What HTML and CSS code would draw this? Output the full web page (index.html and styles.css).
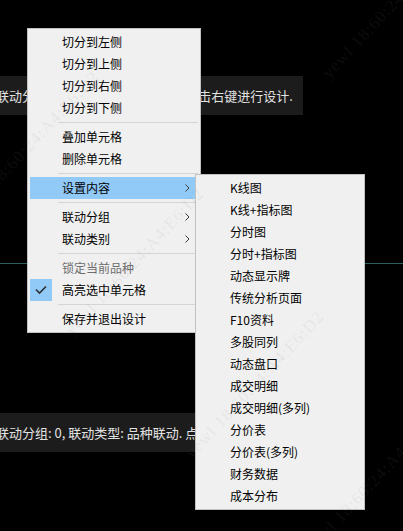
FILE: index.html
```html
<!DOCTYPE html>
<html lang="zh-CN">
<head>
<meta charset="utf-8">
<title>设计菜单</title>
<link rel="stylesheet" href="styles.css">
</head>
<body>
<div class="screen">
  <div class="tip tip-top">联动分组: 0, 联动类型: 品种联动. 点击右键进行设计.</div>
  <div class="hline"></div>
  <div class="tip tip-bottom">联动分组: 0, 联动类型: 品种联动. 点击右键进行设计.</div>

  <div class="menu main-menu">
    <div class="item"><span class="icon"></span><span class="label">切分到左侧</span></div>
    <div class="item"><span class="icon"></span><span class="label">切分到上侧</span></div>
    <div class="item"><span class="icon"></span><span class="label">切分到右侧</span></div>
    <div class="item"><span class="icon"></span><span class="label">切分到下侧</span></div>
    <div class="sep"></div>
    <div class="item"><span class="icon"></span><span class="label">叠加单元格</span></div>
    <div class="item"><span class="icon"></span><span class="label">删除单元格</span></div>
    <div class="sep"></div>
    <div class="item active"><span class="icon"></span><span class="label">设置内容</span>
      <svg class="arrow" width="5" height="8" viewBox="0 0 5 8"><polyline points="0.5,0.5 4,4 0.5,7.5" fill="none" stroke="#3a3a3a" stroke-width="1"/></svg></div>
    <div class="sep"></div>
    <div class="item"><span class="icon"></span><span class="label">联动分组</span>
      <svg class="arrow" width="5" height="8" viewBox="0 0 5 8"><polyline points="0.5,0.5 4,4 0.5,7.5" fill="none" stroke="#3a3a3a" stroke-width="1"/></svg></div>
    <div class="item"><span class="icon"></span><span class="label">联动类别</span>
      <svg class="arrow" width="5" height="8" viewBox="0 0 5 8"><polyline points="0.5,0.5 4,4 0.5,7.5" fill="none" stroke="#3a3a3a" stroke-width="1"/></svg></div>
    <div class="sep"></div>
    <div class="item disabled"><span class="icon"></span><span class="label">锁定当前品种</span></div>
    <div class="item"><span class="icon checked"><svg width="22" height="22" viewBox="0 0 22 22"><polyline points="6,10.5 9.5,14 16,7.5" fill="none" stroke="#2f2f2f" stroke-width="1.6"/></svg></span><span class="label">高亮选中单元格</span></div>
    <div class="sep"></div>
    <div class="item"><span class="icon"></span><span class="label">保存并退出设计</span></div>
  </div>

  <div class="menu sub-menu">
    <div class="item"><span class="icon"></span><span class="label">K线图</span></div>
    <div class="item"><span class="icon"></span><span class="label">K线+指标图</span></div>
    <div class="item"><span class="icon"></span><span class="label">分时图</span></div>
    <div class="item"><span class="icon"></span><span class="label">分时+指标图</span></div>
    <div class="item"><span class="icon"></span><span class="label">动态显示牌</span></div>
    <div class="item"><span class="icon"></span><span class="label">传统分析页面</span></div>
    <div class="item"><span class="icon"></span><span class="label">F10资料</span></div>
    <div class="item"><span class="icon"></span><span class="label">多股同列</span></div>
    <div class="item"><span class="icon"></span><span class="label">动态盘口</span></div>
    <div class="item"><span class="icon"></span><span class="label">成交明细</span></div>
    <div class="item"><span class="icon"></span><span class="label">成交明细(多列)</span></div>
    <div class="item"><span class="icon"></span><span class="label">分价表</span></div>
    <div class="item"><span class="icon"></span><span class="label">分价表(多列)</span></div>
    <div class="item"><span class="icon"></span><span class="label">财务数据</span></div>
    <div class="item"><span class="icon"></span><span class="label">成本分布</span></div>
  </div>

  <div class="wm wm-a">yewl 18:60:24:A4:E6:D2</div>
  <div class="wm wm-b">yewl 18:60:24:A4:E6:D2</div>
  <div class="wm wm-c">yewl 18:60:24:A4:E6:D2</div>
  <div class="wm wm-d">yewl 18:60:24:A4:E6:D2</div>
  <div class="wm wm-e">yewl 18:60:24:A4:E6:D2</div>
</div>
</body>
</html>
```

FILE: styles.css
```css
html, body {
  margin: 0;
  padding: 0;
  background: #000;
}

.screen {
  position: relative;
  display: flow-root;
  width: 403px;
  height: 531px;
  overflow: hidden;
  background: #000;
  font-family: "Noto Sans CJK SC", "Noto Sans", sans-serif;
}

.tip {
  width: max-content;
  margin-left: -14px;
  box-sizing: border-box;
  height: 39px;
  padding: 1px 10px 0;
  line-height: 37px;
  background: #1c1c1c;
  color: #e2e2e2;
  font-size: 13px;
  white-space: nowrap;
}

.tip-top {
  margin-top: 76px;
}

.hline {
  height: 1px;
  margin-top: 148px;
  background: #2a5e5e;
}

.tip-bottom {
  margin-top: 149px;
}

.menu {
  position: absolute;
  box-sizing: border-box;
  border: 1px solid #c2c2c2;
  padding: 2px;
  background: #f0f0f0;
  font-size: 12px;
  color: #000;
}

.main-menu {
  left: 27px;
  top: 28px;
  width: 174px;
}

.sub-menu {
  left: 195px;
  top: 174px;
  width: 170px;
}

.item {
  display: flex;
  align-items: center;
  height: 22px;
  padding-right: 8px;
  white-space: nowrap;
}

.item.active {
  background: #91c9f7;
}

.item.disabled {
  color: #6d6d6d;
}

.icon {
  flex: none;
  width: 22px;
  height: 22px;
  margin-right: 10px;
}

.icon svg {
  display: block;
}

.icon.checked {
  background: #91c9f7;
}

.label {
  flex: 1;
  margin-bottom: 2px;
}

.arrow {
  flex: none;
  display: block;
}

.sep {
  height: 1px;
  margin: 3px 0 3px 28px;
  background: #d5d5d5;
}

.wm {
  position: absolute;
  white-space: nowrap;
  pointer-events: none;
  font-family: "Liberation Serif", serif;
  font-size: 17px;
  letter-spacing: 1px;
  color: rgba(128, 128, 128, 0.11);
  transform: translate(-50%, -50%) rotate(-47deg);
}

.wm-a { left: 30px;  top: 145px; }
.wm-b { left: 135px; top: 262px; }
.wm-c { left: 255px; top: 385px; }
.wm-d { left: 392px; top: 5px; }
.wm-e { left: 375px; top: 480px; }
```
